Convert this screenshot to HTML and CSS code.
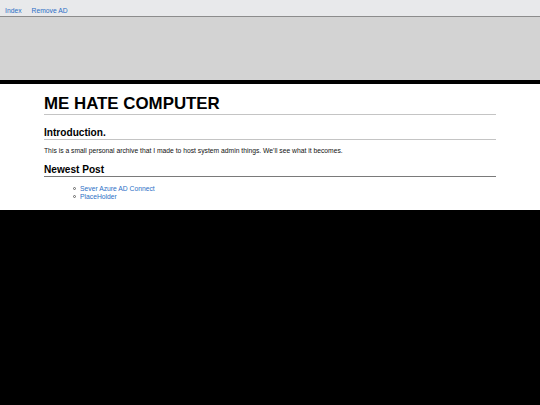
FILE: index.html
```html
<!DOCTYPE html>
<html>
<head>
<meta charset="utf-8">
<title>ME HATE COMPUTER</title>
<link rel="stylesheet" href="styles.css">
</head>
<body>
<nav class="topnav">
  <a class="navlink" href="#">Index</a>
  <a class="navlink" href="#">Remove AD</a>
</nav>
<div class="banner"></div>
<main class="content">
  <h1 class="title">ME HATE COMPUTER</h1>
  <h2 class="section intro">Introduction.</h2>
  <p class="text">This is a small personal archive that I made to host system admin things. We'll see what it becomes.</p>
  <h2 class="section newest">Newest Post</h2>
  <ul class="posts">
    <li class="post"><a class="postlink" href="#">Sever Azure AD Connect</a></li>
    <li class="post"><a class="postlink" href="#">PlaceHolder</a></li>
  </ul>
</main>
</body>
</html>
```

FILE: styles.css
```css
html, body {
  margin: 0;
  padding: 0;
  background: #000;
  font-family: "Liberation Sans", Arial, sans-serif;
}
.topnav {
  box-sizing: border-box;
  height: 17px;
  background: #e8e9eb;
  padding: 7px 0 0;
  border-bottom: 1px solid #8c8c8c;
  display: flex;
}
.navlink {
  font-size: 6.75px;
  line-height: 7px;
  color: #2d6fc6;
  text-decoration: none;
  padding: 0 5px;
}
.banner {
  background: #d3d3d3;
  height: 63px;
  border-bottom: 4px solid #000;
}
.content {
  background: #fff;
  padding: 10px 44px 8.7px;
}
.title {
  margin: 0;
  font-size: 16.875px;
  line-height: 19px;
  font-weight: bold;
  color: #000;
  padding-bottom: 1px;
  border-bottom: 1px solid #c4c4c4;
}
.section {
  margin: 0;
  font-size: 10.125px;
  line-height: 12px;
  font-weight: bold;
  color: #000;
  padding-bottom: 0.4px;
}
.intro {
  margin-top: 11.6px;
  border-bottom: 1px solid #c4c4c4;
}
.newest {
  margin-top: 8.85px;
  border-bottom: 1px solid #7a7a7a;
}
.text {
  margin: 6.8px 0 0;
  font-size: 6.75px;
  line-height: 8px;
  color: #111;
}
.posts {
  margin: 8.3px 0 0;
  padding-left: 36px;
  list-style: none;
  font-size: 6.75px;
  line-height: 8px;
}
.post::before {
  content: "";
  display: inline-block;
  box-sizing: border-box;
  width: 3px;
  height: 3px;
  margin-left: -7px;
  margin-right: 4px;
  border: 0.6px solid #666;
  border-radius: 50%;
  vertical-align: 1px;
}
.postlink {
  color: #2d6fc6;
  text-decoration: none;
}
```
